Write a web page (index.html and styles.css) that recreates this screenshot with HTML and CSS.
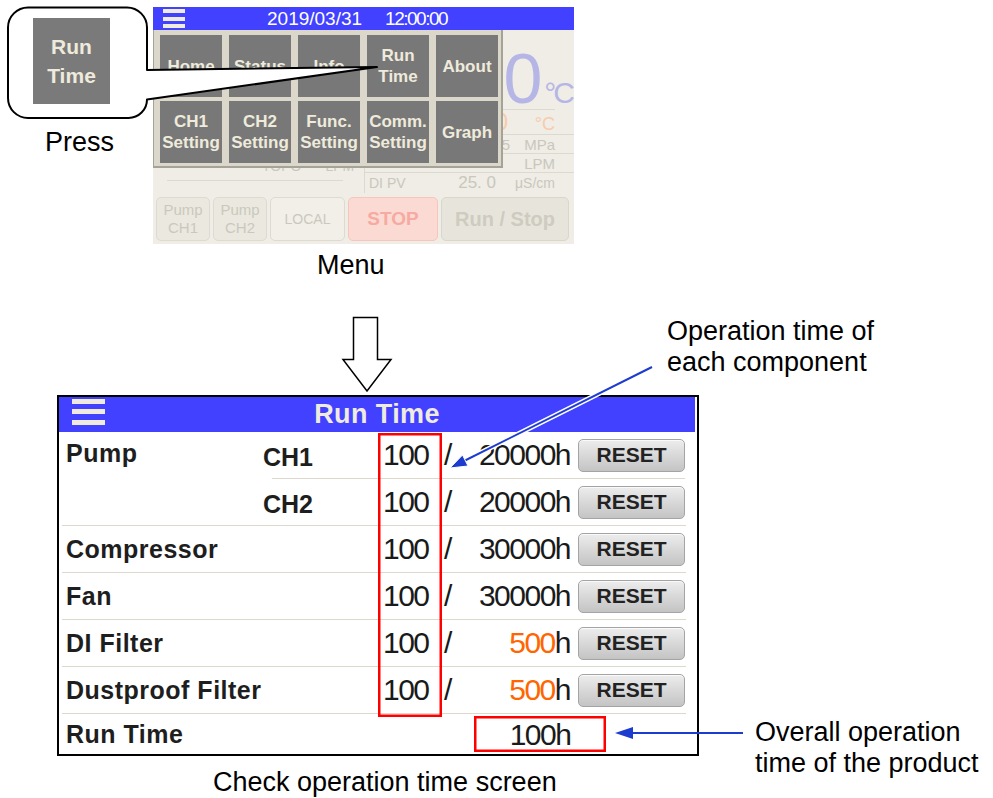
FILE: index.html
```html
<!DOCTYPE html>
<html>
<head>
<meta charset="utf-8">
<link rel="stylesheet" href="styles.css">
</head>
<body>
<div class="canvas">

  <div class="menu-screen">
    <div class="ms-header">
      <svg class="ms-burger" width="22" height="19" viewBox="0 0 22 19"><rect x="0" y="0" width="22" height="4"/><rect x="0" y="8" width="22" height="4"/><rect x="0" y="15" width="22" height="4"/></svg>
      <div class="ms-clock"><span>2019/03/31</span><span class="ms-time">12:00:00</span></div>
    </div>
    <div class="ms-body">
      <div class="ms-main">
        <div class="ms-left">
          <div class="ms-lrow"><span class="ms-t1">TOPO</span><span class="ms-t2">LPM</span></div>
        </div>
        <div class="ms-right">
          <div class="ms-temp"><span class="ms-big">0</span><span class="ms-bigunit">°C</span></div>
          <div class="ms-rrow orange r2"><span class="ms-l"></span><span class="ms-v">0</span><span class="ms-u">°C</span></div>
          <div class="ms-rrow r3"><span class="ms-l"></span><span class="ms-v">5</span><span class="ms-u">MPa</span></div>
          <div class="ms-rrow r4"><span class="ms-l"></span><span class="ms-v"></span><span class="ms-u">LPM</span></div>
          <div class="ms-rrow r5"><span class="ms-l">DI PV</span><span class="ms-v">25. 0</span><span class="ms-u">μS/cm</span></div>
        </div>
      </div>
      <div class="ms-buttons">
        <div class="ms-btn pump">Pump<br>CH1</div>
        <div class="ms-btn pump">Pump<br>CH2</div>
        <div class="ms-btn local">LOCAL</div>
        <div class="ms-btn stop">STOP</div>
        <div class="ms-btn runstop">Run / Stop</div>
      </div>
      <div class="ms-menu">
        <div class="mm-btn">Home</div>
        <div class="mm-btn">Status</div>
        <div class="mm-btn">Info</div>
        <div class="mm-btn">Run<br>Time</div>
        <div class="mm-btn">About</div>
        <div class="mm-btn">CH1<br>Setting</div>
        <div class="mm-btn">CH2<br>Setting</div>
        <div class="mm-btn">Func.<br>Setting</div>
        <div class="mm-btn">Comm.<br>Setting</div>
        <div class="mm-btn">Graph</div>
      </div>
    </div>
  </div>

  <svg class="bubble" width="400" height="130" viewBox="0 0 400 130"><path d="M28 7.5 H127 A20 20 0 0 1 147 27.5 V70 L377 67 L147 99.5 A18.5 18.5 0 0 1 128.5 118 H28 A20 20 0 0 1 8 98 V27.5 A20 20 0 0 1 28 7.5 Z" fill="#fff" stroke="#000" stroke-width="2" stroke-linejoin="round"/></svg>

  <div class="callout">
    <div class="co-btn">Run<br>Time</div>
    <div class="note press">Press</div>
  </div>

  <div class="note menu-label">Menu</div>

  <div class="rt-screen">
    <div class="rt-header">
      <svg class="rt-burger" width="33" height="26" viewBox="0 0 33 26"><rect x="0" y="0" width="33" height="5"/><rect x="0" y="10" width="33" height="5"/><rect x="0" y="21" width="33" height="5"/></svg>
      <div class="rt-title">Run Time</div>
      <div></div>
    </div>
    <div class="rt-body">
      <div class="rt-group">
        <div class="rt-label pump">Pump</div>
        <div class="rt-subs">
          <div class="rt-sub first">
            <div class="rt-ch c1">CH1</div>
            <div class="rt-val">100</div>
            <div class="rt-slash">/</div>
            <div class="rt-max">20000h</div>
            <button class="rt-reset">RESET</button>
          </div>
          <div class="rt-sub">
            <div class="rt-ch">CH2</div>
            <div class="rt-val">100</div>
            <div class="rt-slash">/</div>
            <div class="rt-max">20000h</div>
            <button class="rt-reset">RESET</button>
          </div>
        </div>
      </div>
      <div class="rt-row">
        <div class="rt-label wide">Compressor</div>
        <div class="rt-val">100</div>
        <div class="rt-slash">/</div>
        <div class="rt-max">30000h</div>
        <button class="rt-reset">RESET</button>
      </div>
      <div class="rt-row">
        <div class="rt-label wide">Fan</div>
        <div class="rt-val">100</div>
        <div class="rt-slash">/</div>
        <div class="rt-max">30000h</div>
        <button class="rt-reset">RESET</button>
      </div>
      <div class="rt-row">
        <div class="rt-label wide">DI Filter</div>
        <div class="rt-val">100</div>
        <div class="rt-slash">/</div>
        <div class="rt-max"><span class="warn">500</span>h</div>
        <button class="rt-reset">RESET</button>
      </div>
      <div class="rt-row">
        <div class="rt-label wide">Dustproof Filter</div>
        <div class="rt-val">100</div>
        <div class="rt-slash">/</div>
        <div class="rt-max"><span class="warn">500</span>h</div>
        <button class="rt-reset">RESET</button>
      </div>
      <div class="rt-row total">
        <div class="rt-label total-l">Run Time</div>
        <div class="rt-total">100h</div>
      </div>
    </div>
  </div>

  <svg class="overlay" width="993" height="798" viewBox="0 0 993 798">
    <path d="M353.5 317.5 H377.5 V359.5 H391 L367 391 L343 359.5 H353.5 Z" fill="#fff" stroke="#000" stroke-width="1.5" stroke-linejoin="miter"/>
    <rect x="379.25" y="434.25" width="61.5" height="281.5" fill="none" stroke="#ff0000" stroke-width="2.5"/>
    <rect x="475.25" y="717.25" width="129.5" height="33.5" fill="none" stroke="#ff0000" stroke-width="2.5"/>
    <line x1="652" y1="367" x2="463" y2="461.5" stroke="#fff" stroke-width="5"/>
    <line x1="652" y1="367" x2="463" y2="461.5" stroke="#1c3ccf" stroke-width="2"/>
    <polygon points="450,468 468,466 462.5,455" fill="#1c3ccf" stroke="#fff" stroke-width="1"/>
    <line x1="743" y1="733" x2="630" y2="733" stroke="#1c3ccf" stroke-width="2"/>
    <polygon points="615,733 633,727 633,739" fill="#1c3ccf"/>
  </svg>

  <div class="note op-note">Operation time of<br>each component</div>
  <div class="note total-note">Overall operation<br>time of the product</div>
  <div class="note caption">Check operation time screen</div>
</div>
</body>
</html>
```

FILE: styles.css
```css
* { box-sizing: border-box; }
body { margin: 0; background: #fff; font-family: "Liberation Sans", Arial, sans-serif; }
.canvas { position: relative; width: 993px; height: 798px; overflow: hidden; background: #fff; }

/* ---------- menu screen (top) ---------- */
.menu-screen { position: absolute; left: 153px; top: 7px; width: 421px; height: 237px; background: #efede5; display: flex; flex-direction: column; }
.ms-header { height: 23px; flex: none; background: #4141ff; display: flex; align-items: center; padding-left: 10px; color: #fff; }
.ms-burger { display: block; fill: #efebe0; }
.ms-clock { margin-left: 82px; font-size: 19px; line-height: 23px; display: flex; gap: 23px; }
.ms-time { letter-spacing: -1.5px; }
.ms-body { position: relative; flex: 1; }
.ms-main { display: flex; height: 163px; }
.ms-left { width: 211px; }
.ms-lrow { height: 151px; margin-left: 14px; width: 176px; border-bottom: 1px solid #dcd9cf; display: flex; align-items: flex-end; padding-bottom: 6px; font-size: 14px; color: #cac8be; }
.ms-t1 { margin-left: 95px; }
.ms-t2 { margin-left: 24px; }
.ms-right { width: 210px; border-left: 1px solid #dcd9cf; color: #c9c7bd; }
.ms-temp { height: 80px; display: flex; justify-content: flex-end; align-items: baseline; padding: 19px 2px 0 0; color: #b6b6e6;
  background: linear-gradient(#dcd9cf, #dcd9cf) no-repeat left bottom / calc(100% - 19px) 1px; }
.ms-big { font-size: 70px; line-height: 60px; }
.ms-bigunit { font-size: 30px; line-height: 30px; letter-spacing: -3px; margin-left: 2px; }
.ms-rrow { display: grid; grid-template-columns: 1fr auto 45px; align-items: baseline; padding-right: 19px; border-bottom: 1px solid #dcd9cf; }
.ms-l { font-size: 14px; padding-left: 4px; }
.ms-v { text-align: right; padding-right: 2px; }
.ms-u { text-align: right; font-size: 15px; }
.r2 { height: 25px; color: #f8cbad; line-height: 25px; }
.r2 .ms-v { font-size: 23px; }
.r2 .ms-u { font-size: 18px; }
.r3 { height: 19px; }
.r3 .ms-v { font-size: 15px; line-height: 19px; padding-right: 0; }
.r4 { height: 19px; line-height: 19px; }
.r5 { height: 20px; line-height: 20px; border-bottom: none; }
.r5 .ms-v { font-size: 17px; padding-right: 14px; }
.r5 .ms-u { font-size: 14px; }
.ms-buttons { display: flex; gap: 3px; margin-top: 4px; height: 44px; padding-left: 3px; }
.ms-btn { display: flex; align-items: center; justify-content: center; text-align: center; border-radius: 5px; border: 1px solid #dddbd1; background: #ebe9df; color: #cac8be; }
.ms-btn.pump { width: 54px; font-size: 15px; line-height: 18px; }
.ms-btn.local { width: 75px; font-size: 14px; background: #f1efe8; }
.ms-btn.stop { width: 90px; font-size: 19px; font-weight: bold; background: #fbdad3; border-color: #f6c6bd; color: #f6aaa1; }
.ms-btn.runstop { width: 128px; font-size: 20px; font-weight: bold; background: #e7e5db; border-color: #d9d7cd; color: #cecbc1; }

.ms-menu { position: absolute; left: 0; top: 0; width: 350px; height: 138px; background: #dbd7ca; border: 1px solid #a5a298; border-top: none; border-right-width: 2px; border-bottom-width: 2px;
  padding: 5px 0 0 6px; display: grid; grid-template-columns: repeat(5, 62px); grid-auto-rows: 62px; gap: 4px 7px; }
.mm-btn { background: #787878; color: #efebdc; font-weight: bold; font-size: 17px; line-height: 21px; display: flex; align-items: center; justify-content: center; text-align: center; }

/* ---------- callout ---------- */
.bubble { position: absolute; left: 0; top: 0; }
.callout { position: absolute; left: 8px; top: 7px; width: 140px; display: flex; flex-direction: column; }
.co-btn { margin: 11px 0 0 25px; width: 77px; height: 86px; background: #7a7a7a; color: #efebdc; font-weight: bold; font-size: 21px; line-height: 29px; display: flex; align-items: center; justify-content: center; text-align: center; }
.note { font-size: 27px; line-height: 31px; color: #000; white-space: nowrap; }
.press { margin: 23px 0 0 37px; }
.menu-label { position: absolute; left: 317px; top: 250px; }
.op-note { position: absolute; left: 667px; top: 316px; }
.total-note { position: absolute; left: 755px; top: 717px; }
.caption { position: absolute; left: 213px; top: 767px; }

/* ---------- run time screen ---------- */
.rt-screen { position: absolute; left: 57px; top: 395px; width: 642px; height: 361px; border: 2px solid #000; background: #fff; display: flex; flex-direction: column; }
.rt-header { height: 35px; flex: none; margin-right: 2px; background: #4141ff; display: grid; grid-template-columns: 1fr auto 1fr; align-items: center; }
.rt-burger { display: block; fill: #efebe0; margin: 2px 0 0 13px; align-self: start; }
.rt-title { color: #efebdf; font-weight: bold; font-size: 27px; letter-spacing: 0.4px; }
.rt-body { padding: 0 11px 0 3px; color: #1e1e1e; }
.rt-row, .rt-group { display: flex; border-bottom: 1px solid #dcd9cc; }
.rt-row { height: 47px; align-items: center; }
.rt-row.total { height: 41px; border-bottom: none; }
.rt-subs { display: flex; flex-direction: column; }
.rt-sub { display: flex; align-items: center; height: 46px; }
.rt-sub.first { height: 47px; margin-left: 9px; border-bottom: 1px solid #dcd9cc; }
.rt-sub.first .rt-ch { margin-left: -9px; }
.rt-label { flex: none; width: 201px; padding-left: 4px; font-weight: bold; font-size: 25px; letter-spacing: 0.5px; }
.rt-label.pump { align-self: flex-start; padding-top: 7px; }
.rt-label.wide { width: 319px; }
.rt-label.total-l { width: 412px; }
.rt-ch { flex: none; width: 118px; font-weight: bold; font-size: 25px; padding-top: 4px; }
.rt-val, .rt-max, .rt-total, .rt-slash { font-size: 30px; letter-spacing: -1.5px; color: #1a1a1a; }
.rt-val { flex: none; width: 60px; padding-left: 2px; }
.rt-slash { flex: none; width: 20px; padding-left: 3px; letter-spacing: 0; }
.rt-max { flex: none; width: 109px; text-align: right; }
.warn { color: #ff6600; }
.rt-reset { flex: none; margin-left: 8px; width: 107px; height: 33px; padding: 0; border: 1px solid #a4a4a4; border-radius: 5px;
  background: linear-gradient(#ededed, #d6d6d6 55%, #c4c4c4); box-shadow: inset 0 1px 0 #fafafa;
  font-family: "Liberation Sans", Arial, sans-serif; font-weight: bold; font-size: 21px; color: #222; }
.rt-total { flex: none; width: 132px; text-align: center; }

.overlay { position: absolute; left: 0; top: 0; pointer-events: none; }
```
